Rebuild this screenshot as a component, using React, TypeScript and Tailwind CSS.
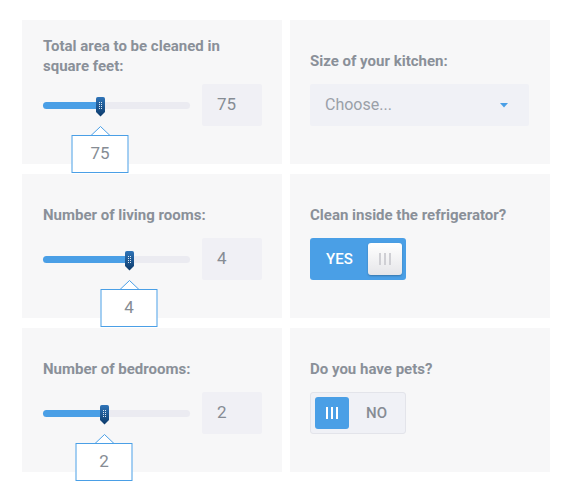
import React from 'react';

const font = { fontFamily: 'Roboto, "Noto Sans", sans-serif' };

// slider handle: rounded body with a pointed bottom and a grip of dots
const Handle: React.FC = () => (
  <svg width="9" height="20" viewBox="0 0 9 20">
    <defs>
      <linearGradient id="hg" x1="0" y1="0" x2="0" y2="1">
        <stop offset="0" stopColor="#2f74b8" />
        <stop offset="1" stopColor="#0c3a6b" />
      </linearGradient>
    </defs>
    <path d="M1.8 0 H7.2 Q9 0 9 1.8 V15 L4.5 19.5 L0 15 V1.8 Q0 0 1.8 0 Z" fill="url(#hg)" />
    {[5, 7, 9, 11].map((y) => (
      <React.Fragment key={y}>
        <rect x="3" y={y} width="1" height="1" fill="#ffffff" opacity="0.85" />
        <rect x="5" y={y} width="1" height="1" fill="#ffffff" opacity="0.85" />
      </React.Fragment>
    ))}
  </svg>
);

interface SliderProps {
  pos: number; // handle centre in px from track start
  value: string;
}

const Slider: React.FC<SliderProps> = ({ pos, value }) => (
  <div className="flex items-center gap-[12px]">
    <div className="relative w-[147px] h-[7px] rounded-full bg-[#ebebf1]">
      <div className="absolute left-0 top-0 h-full rounded-full bg-[#4a9fe6]" style={{ width: pos }} />
      <div className="absolute top-[-5px] flex" style={{ left: pos - 4.5 }}>
        <Handle />
      </div>
      <div className="absolute top-[24px] z-10 flex flex-col items-center -translate-x-1/2" style={{ left: pos }}>
        <svg width="20" height="10" viewBox="0 0 20 10" className="-mb-px block">
          <path d="M0 10 L10 0.5 L20 10" fill="#ffffff" stroke="#4a9fe6" strokeWidth="1" />
        </svg>
        <div className="w-[57px] h-[38px] border border-[#4a9fe6] bg-white flex items-center justify-center text-[17px] text-[#868c94]">
          {value}
        </div>
      </div>
    </div>
    <div className="w-[60px] h-[42px] rounded-[2px] bg-[#f0f0f5] flex items-center pl-[15px] text-[17px] text-[#868c94]">
      {value}
    </div>
  </div>
);

const Label: React.FC<{ children: React.ReactNode; twoLines?: boolean }> = ({ children, twoLines }) => (
  <div className="h-[64px]">
    <div className={(twoLines ? 'pt-[16px]' : 'pt-[31px]') + ' text-[15px] leading-[20px] font-bold text-[#8a9099] pr-[20px]'}>
      {children}
    </div>
  </div>
);

const Card: React.FC<{ children: React.ReactNode; left?: boolean }> = ({ children, left }) => (
  <div className={(left ? 'pl-[21px]' : 'pl-[20px]') + ' h-[144px] bg-[#f7f7f8] flex flex-col'}>{children}</div>
);

const Bars: React.FC<{ color: string }> = ({ color }) => (
  <div className="flex gap-[3px]">
    <div className={color + ' w-[2px] h-[12px]'} />
    <div className={color + ' w-[2px] h-[12px]'} />
    <div className={color + ' w-[2px] h-[12px]'} />
  </div>
);

export default function App() {
  return (
    <div className="min-h-screen bg-white pt-[20px] pl-[22px]" style={font}>
      <div className="grid grid-cols-[260px_260px] gap-x-[8px] gap-y-[10px]">
        <Card left>
          <Label twoLines>
            Total area to be cleaned in
            <br />
            square feet:
          </Label>
          <Slider pos={57} value="75" />
        </Card>

        <Card>
          <Label>Size of your kitchen:</Label>
          <div className="w-[219px] h-[42px] bg-[#f0f1f6] rounded-[2px] flex items-center justify-between pl-[15px] pr-[21px]">
            <span className="text-[16px] text-[#9aa0a8]">Choose...</span>
            <svg width="8" height="5" viewBox="0 0 8 5">
              <path d="M0 0 H8 L4 4.5 Z" fill="#4a9fe6" />
            </svg>
          </div>
        </Card>

        <Card left>
          <Label>Number of living rooms:</Label>
          <Slider pos={86} value="4" />
        </Card>

        <Card>
          <Label>Clean inside the refrigerator?</Label>
          <div className="w-[96px] h-[42px] rounded-[3px] bg-[#4a9fe6] flex items-center pl-[16px] pr-[4px] justify-between">
            <span className="text-[15px] font-medium text-white">YES</span>
            <div className="w-[34px] h-[32px] rounded-[3px] bg-gradient-to-b from-white to-[#e6e6e9] shadow-[0_1px_2px_rgba(0,0,0,0.25)] flex items-center justify-center">
              <Bars color="bg-[#cfcfd4]" />
            </div>
          </div>
        </Card>

        <Card left>
          <Label>Number of bedrooms:</Label>
          <Slider pos={61} value="2" />
        </Card>

        <Card>
          <Label>Do you have pets?</Label>
          <div className="w-[96px] h-[42px] rounded-[3px] bg-[#f0f1f6] border border-[#e3e4ea] flex items-center pl-[4px]">
            <div className="w-[34px] h-[32px] rounded-[3px] bg-[#4a9fe6] flex items-center justify-center">
              <Bars color="bg-white" />
            </div>
            <span className="ml-[17px] text-[15px] font-medium text-[#868c94]">NO</span>
          </div>
        </Card>
      </div>
    </div>
  );
}
